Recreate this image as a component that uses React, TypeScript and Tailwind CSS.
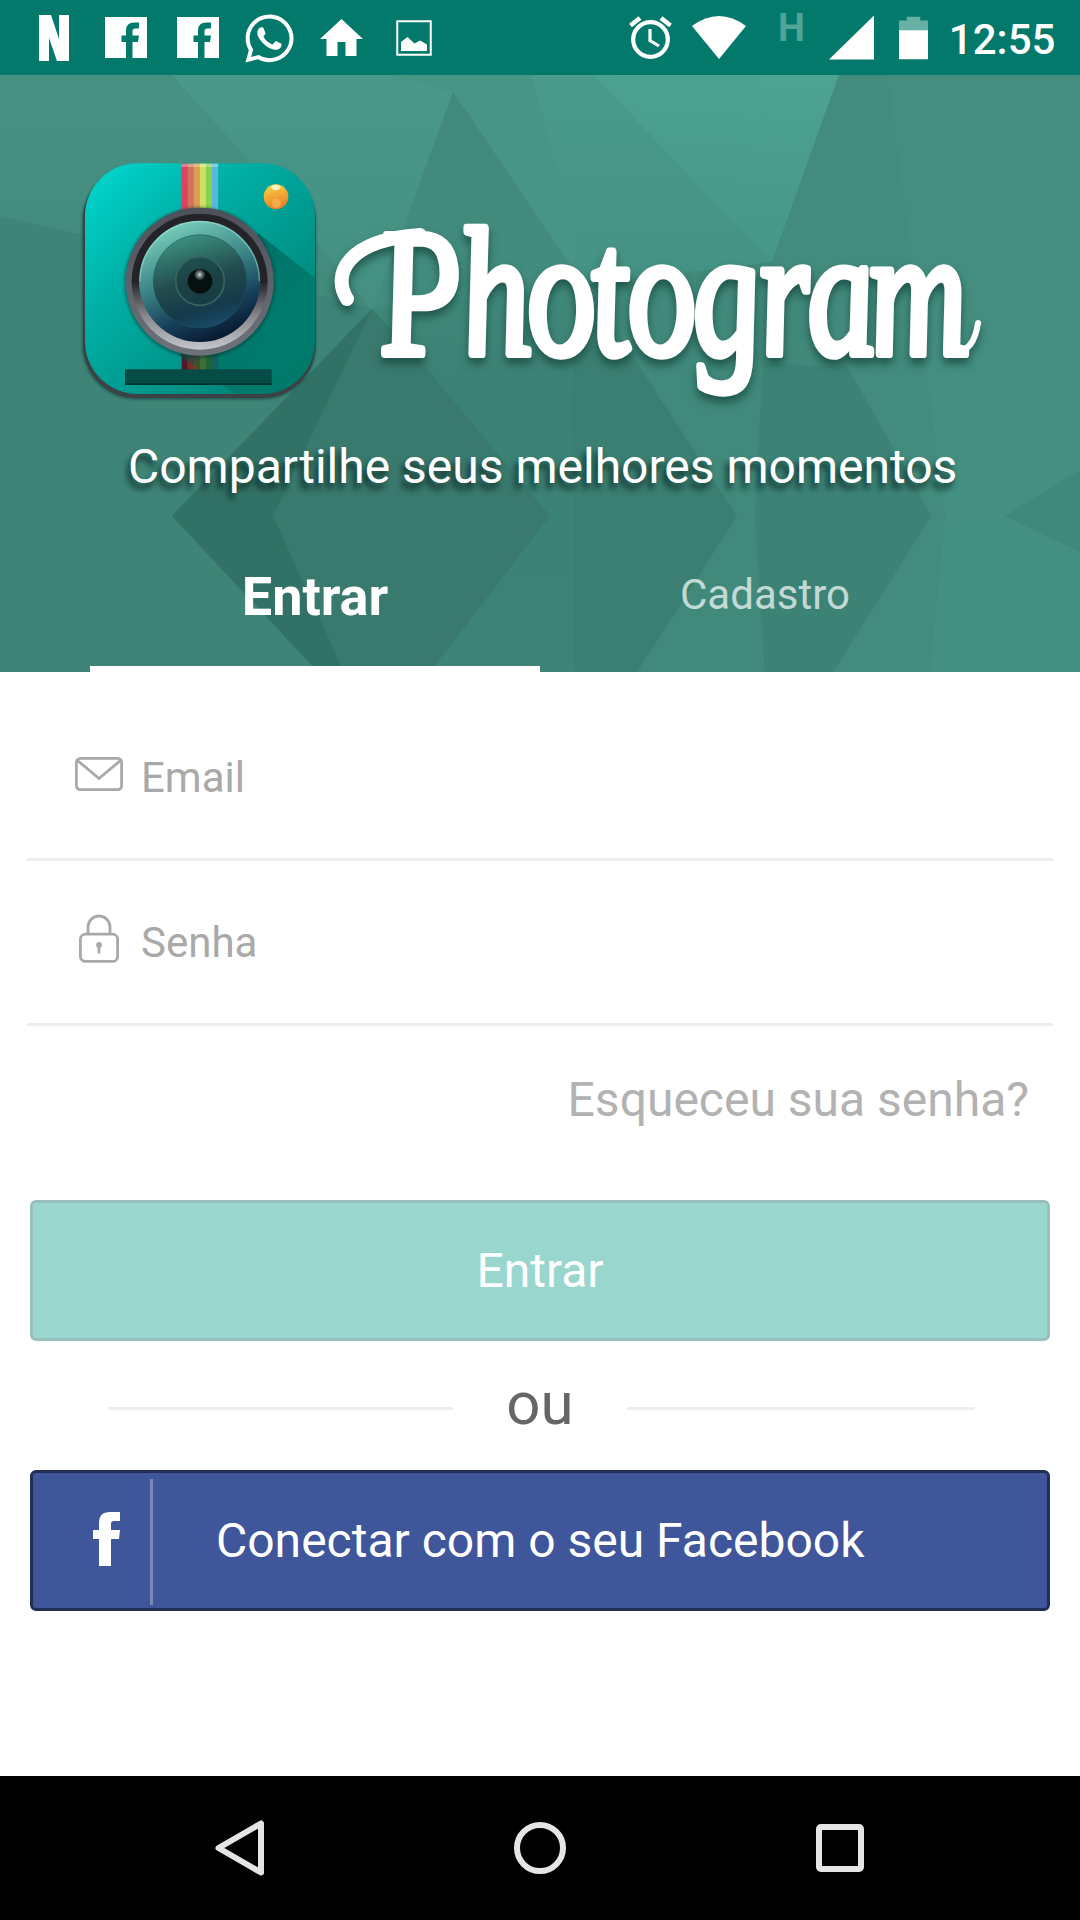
import React from "react";
import { FaWhatsapp } from "react-icons/fa";

function NetflixIcon() {
  return (
    <svg className="ml-[39px] h-[46px] w-[30px]" viewBox="0 0 30 46" fill="#fff">
      <path d="M0 0h12l8 24V0h10v46H18L10 23v23H0z" />
    </svg>
  );
}

function FacebookSquare({ className }: { className: string }) {
  return (
    <svg className={className} viewBox="0 0 42 41" fill="#fff">
      <path d="M0 0h42v41H27.500V25H33l1-6.500h-6.500v-4.200q0-2.800 3-2.800H34V5.500h-5q-8 0-8 8v5h-4.500V25H21v16H0z" />
    </svg>
  );
}

function StatusBar() {
  return (
    <div className="flex h-[75px] w-full items-center bg-[#02796b]">
      <NetflixIcon />
      <FacebookSquare className="ml-[36px] h-[41px] w-[42px]" />
      <FacebookSquare className="ml-[30px] h-[41px] w-[42px]" />
      <FaWhatsapp className="mt-px ml-[23px] text-[55px] text-white" />
      <svg className="ml-[23px] h-[37px] w-[43px]" viewBox="0 0 43 37" fill="#fff">
        <path d="M21.500 0 43 20H36.500v17h-11V23h-8v14h-11V20H0z" />
      </svg>
      <svg className="ml-[33px] mt-px h-[36px] w-[36px]" viewBox="0 0 36 36">
        <rect x="1.250" y="1.250" width="33.500" height="33.500" fill="none" stroke="#fff" strokeWidth="2" />
        <path d="M5 22l6.500-5 7 6.500 5.500-3 7 4V31H5z" fill="#fff" />
      </svg>
      <svg className="ml-[197px] h-[43px] w-[43px]" viewBox="0 0 43 43" fill="none" stroke="#fff">
        <circle cx="21.500" cy="23.500" r="17.300" strokeWidth="4.200" />
        <path d="M21 13v11.500l9 5.500" strokeWidth="3.200" />
        <path d="M1.500 9.500 11 2M41.500 9.500 32 2" strokeWidth="4.600" />
      </svg>
      <svg className="mr-[32px] ml-[20px] h-[43px] w-[54px]" viewBox="0 0 54 43" fill="#fff">
        <path d="M0 10Q27-10 54 10L27 43z" />
      </svg>
      <span className="mb-[20px] font-[Roboto] text-[38px] leading-none font-bold text-[#52a398]">H</span>
      <svg className="ml-[24px] h-[45px] w-[45px]" viewBox="0 0 46 45" fill="#fff">
        <path d="M46 0v45H0z" />
      </svg>
      <svg className="ml-[25px] h-[44px] w-[29px]" viewBox="0 0 30 44">
        <path d="M8 0h14v4h8v11H0V4h8z" fill="#68afa6" />
        <path d="M0 14h30v30H0z" fill="#fff" />
      </svg>
      <span className="mt-[5px] ml-[21px] font-[Roboto] text-[42px] leading-none font-medium text-white">12:55</span>
    </div>
  );
}

function FacetedBackdrop() {
  return (
    <svg className="absolute inset-0 h-[597px] w-[1080px]" viewBox="0 75 1080 597" preserveAspectRatio="none">
      <defs>
        <linearGradient id="base" x1="0" y1="0" x2="0" y2="1">
          <stop offset="0" stopColor="#479182" />
          <stop offset="0.450" stopColor="#41897b" />
          <stop offset="1" stopColor="#3e8678" />
        </linearGradient>
        <linearGradient id="right" x1="0" y1="0" x2="0" y2="1">
          <stop offset="0" stopColor="#448d7f" />
          <stop offset="1" stopColor="#439082" />
        </linearGradient>
        <linearGradient id="mid" x1="0" y1="0" x2="0" y2="1">
          <stop offset="0" stopColor="#4a9b8c" />
          <stop offset="1" stopColor="#449284" />
        </linearGradient>
        <linearGradient id="glow" x1="0.600" y1="0" x2="0.500" y2="1">
          <stop offset="0" stopColor="#4da292" />
          <stop offset="1" stopColor="#459788" />
        </linearGradient>
        <linearGradient id="peak" x1="0" y1="0" x2="0" y2="1">
          <stop offset="0" stopColor="#41897b" />
          <stop offset="1" stopColor="#428c7e" />
        </linearGradient>
        <linearGradient id="lower" x1="0" y1="0" x2="0" y2="1">
          <stop offset="0" stopColor="#418a7b" />
          <stop offset="0.350" stopColor="#3b8174" />
          <stop offset="1" stopColor="#3d8477" />
        </linearGradient>
      </defs>
      <rect y="75" width="1080" height="597" fill="url(#base)" />
      <path d="M0 216 83 235 372 309 172 516 318 672H0z" fill="#3e8578" />
      <path d="M172 75H390L453 92 403 229 372 309 240 150z" fill="url(#mid)" opacity="0.700" />
      <path d="M390 75H534L573 227V269L453 92z" fill="#479585" />
      <path d="M532 75H593L772 262 573 287V227z" fill="url(#mid)" />
      <path d="M593 75H839L772 262z" fill="url(#glow)" />
      <path d="M453 92 403 229 372 309 573 287V269z" fill="url(#peak)" />
      <path d="M372 309 573 286 772 262 838 350 931 516 833 672H430L550 516 417 357z" fill="url(#lower)" />
      <path d="M839 75H888L945 516 930 672H833L931 516 838 350 772 262z" fill="#428b7d" />
      <path d="M888 75H1080V672H930L945 516z" fill="url(#right)" />
      <path d="M372 309 172 516 318 672H430L550 516 417 357z" fill="#39796e" />
      <path d="M372 309 172 516 318 672H344L273 516z" fill="#327266" />
      <path d="M573 340 633 357 737 516 637 672H575z" fill="#3a7f72" />
      <path d="M633 357 737 516 637 672H765L755 516 763 364 772 262 600 300z" fill="#40897b" />
      <path d="M763 364 772 270 838 350 931 516 833 672H765L755 516z" fill="#3c8376" />
      <path d="M772 262 838 350 845 366 763 364z" fill="#41897b" />
      <path d="M1080 470 1005 516 1080 552z" fill="#3f887a" />
    </svg>
  );
}

const STRIPES = ["#dd4263", "#cf7459", "#dd9b56", "#d0e05d", "#87d153", "#58b8dc"];
const DARK_STRIPES = ["#4d1a2a", "#7c2e20", "#7b4415", "#80811c", "#3c6b20", "#21646d"];

function CameraLogo() {
  return (
    <svg className="h-[280px] w-[280px] shrink-0" viewBox="0 0 840 840">
      <defs>
        <linearGradient id="body" x1="0" y1="0" x2="1" y2="1">
          <stop offset="0.080" stopColor="#00d0c7" />
          <stop offset="0.350" stopColor="#00aea4" />
          <stop offset="0.650" stopColor="#00958a" />
          <stop offset="1" stopColor="#007766" />
        </linearGradient>
        <linearGradient id="cast" x1="0" y1="0" x2="1" y2="1">
          <stop offset="0.300" stopColor="#005548" stopOpacity="0.650" />
          <stop offset="1" stopColor="#006b5c" stopOpacity="0.100" />
        </linearGradient>
        <linearGradient id="rim" x1="0" y1="0" x2="0" y2="1">
          <stop offset="0" stopColor="#4d5058" />
          <stop offset="1" stopColor="#6d727b" />
        </linearGradient>
        <linearGradient id="ring" x1="0" y1="0" x2="0" y2="1">
          <stop offset="0.500" stopColor="#242428" />
          <stop offset="0.750" stopColor="#88868b" />
          <stop offset="1" stopColor="#c5c6cb" />
        </linearGradient>
        <linearGradient id="glass" x1="0.250" y1="0" x2="0.650" y2="1">
          <stop offset="0" stopColor="#7cd3bf" />
          <stop offset="0.450" stopColor="#3a8385" />
          <stop offset="0.750" stopColor="#163f5a" />
          <stop offset="1" stopColor="#06172d" />
        </linearGradient>
        <linearGradient id="inner" x1="0.300" y1="0" x2="0.600" y2="1">
          <stop offset="0" stopColor="#3d9482" />
          <stop offset="0.500" stopColor="#22494c" />
          <stop offset="0.800" stopColor="#153a4b" />
          <stop offset="1" stopColor="#174a69" />
        </linearGradient>
        <linearGradient id="flash" x1="0" y1="0" x2="0.300" y2="1">
          <stop offset="0" stopColor="#fbd84a" />
          <stop offset="1" stopColor="#ea8226" />
        </linearGradient>
        <radialGradient id="spark">
          <stop offset="0" stopColor="#d7dcdc" />
          <stop offset="1" stopColor="#8a9898" stopOpacity="0.200" />
        </radialGradient>
        <filter id="soft" x="-10%" y="-10%" width="120%" height="120%">
          <feGaussianBlur stdDeviation="5" />
        </filter>
        <clipPath id="bodyClip">
          <rect x="75" y="70" width="690" height="692" rx="158" />
        </clipPath>
      </defs>
      <rect x="67" y="82" width="700" height="696" rx="162" fill="#102f2b" opacity="0.600" filter="url(#soft)" />
      <rect x="69" y="78" width="698" height="696" rx="160" fill="#3b4144" />
      <rect x="75" y="70" width="690" height="692" rx="158" fill="url(#body)" />
      <g clipPath="url(#bodyClip)">
        {STRIPES.map((c, i) => (
          <rect key={c} x={365 + i * 18.2} y="70" width="18.500" height="150" fill={c} />
        ))}
        <rect x="365" y="72" width="109" height="9" fill="#fff" opacity="0.300" />
        {DARK_STRIPES.map((c, i) => (
          <rect key={c} x={365 + i * 18.2} y="630" width="18.500" height="60" fill={c} />
        ))}
        <path d="M595 280 770 418V765H530L355 645z" fill="url(#cast)" />
        <path d="M195 688H635V735H195z" fill="#064b45" />
        <path d="M195 730H635V735H195z" fill="#02332f" />
      </g>
      <circle cx="419" cy="428" r="226" fill="#07302c" opacity="0.500" filter="url(#soft)" />
      <circle cx="419" cy="425" r="222" fill="url(#rim)" />
      <circle cx="419" cy="425" r="204" fill="url(#ring)" />
      <circle cx="419" cy="424" r="182" fill="url(#glass)" />
      <path d="M240 424a179 179 0 0 1 358 0" fill="none" stroke="#b9f0e3" strokeWidth="4" opacity="0.450" />
      <circle cx="420" cy="424" r="140" fill="url(#inner)" stroke="#1c5357" strokeOpacity="0.600" strokeWidth="3" />
      <circle cx="420" cy="423" r="73" fill="#173c3f" fillOpacity="0.600" stroke="#35655f" strokeWidth="5" />
      <circle cx="420" cy="424" r="37" fill="#05100f" />
      <circle cx="419" cy="404" r="16" fill="url(#spark)" />
      <circle cx="648" cy="170" r="37" fill="url(#flash)" />
      <ellipse cx="647" cy="142" rx="14" ry="8" fill="#fff3c0" />
      <circle cx="649" cy="190" r="14" fill="#f8b556" opacity="0.700" />
    </svg>
  );
}

function Wordmark() {
  return (
    <svg
      className="h-[280px] w-[660px] shrink-0 overflow-visible drop-shadow-[0_6px_4px_rgba(15,60,50,0.650)]"
      viewBox="340 140 660 280"
      strokeLinecap="round"
      strokeLinejoin="round"
    >
      <path d="M347 299C332 275 346 240 420 235" fill="none" stroke="#fff" strokeWidth="14" />
      <path d="M958 351Q974 350 978 323" fill="none" stroke="#fff" strokeWidth="6" />
      <text
        transform="translate(0 354) scale(0.750 1) skewX(8)"
        x="513 622 709 794 843 929 1018 1082 1165"
        y="0"
        className="font-['Liberation_Serif'] text-[182px] italic"
        fill="#fff"
        stroke="#fff"
        strokeWidth="8"
      >
        Photogram
      </text>
    </svg>
  );
}

function Header() {
  return (
    <header className="relative h-[597px] w-full overflow-hidden">
      <FacetedBackdrop />
      <div className="relative flex flex-col">
        <div className="flex h-[345px] items-start pt-[65px] pl-[60px]">
          <CameraLogo />
          <Wordmark />
        </div>
        <p className="mt-[17px] h-[60px] pl-[128px] text-[48px] leading-[60px] whitespace-nowrap text-white [text-shadow:-3px_6px_6px_rgba(0,25,20,0.800)]">
          Compartilhe seus melhores momentos
        </p>
        <nav className="mx-[90px] mt-[43px] grid h-[132px] grid-cols-2">
          <div className="flex justify-center border-b-[6px] border-white pb-[12px]">
            <span className="self-center text-[54px] leading-[60px] font-bold text-white">Entrar</span>
          </div>
          <div className="flex justify-center pb-[22px]">
            <span className="self-center text-[42px] leading-[60px] text-white/70">Cadastro</span>
          </div>
        </nav>
      </div>
    </header>
  );
}

function MailIcon() {
  return (
    <svg className="mb-[7px] h-[34px] w-[48px]" viewBox="0 0 48 34" fill="none" stroke="#a9a9a9" strokeWidth="2.800">
      <rect x="1.400" y="1.400" width="45.200" height="31.200" rx="4" />
      <path d="M2.500 3.500 24 21.500 45.500 3.500" />
    </svg>
  );
}

function LockIcon() {
  return (
    <svg className="mb-[7px] h-[49px] w-[48px]" viewBox="0 0 48 49" fill="none" stroke="#a9a9a9" strokeWidth="2.800">
      <rect x="5.400" y="20.200" width="37.200" height="27.200" rx="5" />
      <path d="M13 20v-7a11 11 0 0 1 22 0v7" />
      <circle cx="24" cy="31" r="2.900" fill="#a9a9a9" stroke="none" />
      <path d="M24 31v8.500" />
    </svg>
  );
}

function LoginForm() {
  return (
    <main className="flex h-[1104px] flex-col bg-white">
      <div className="mx-[27px] flex h-[189px] items-center border-b-[3px] border-[#eee] pt-[25px] pl-[48px]">
        <MailIcon />
        <span className="ml-[18px] text-[42px] leading-[60px] text-[#a9a9a9]">Email</span>
      </div>
      <div className="mx-[27px] flex h-[165px] items-center border-b-[3px] border-[#eee] pl-[48px]">
        <LockIcon />
        <span className="mt-[2px] ml-[18px] text-[42px] leading-[60px] text-[#a9a9a9]">Senha</span>
      </div>
      <div className="flex h-[174px] items-center justify-end pr-[51px] pb-[27px]">
        <a className="text-[48px] leading-[60px] text-[#b2b2b2]">Esqueceu sua senha?</a>
      </div>
      <button className="mx-[30px] h-[141px] rounded-[6px] border-[3px] border-[#98c0bb] bg-[#99d6ce] text-[48px] text-white">
        Entrar
      </button>
      <div className="flex h-[129px] items-center pr-[105px] pl-[108px]">
        <div className="mt-[6px] h-[3px] w-[345px] bg-[#eee]" />
        <span className="mb-[4px] w-[174px] text-center text-[60px] leading-[70px] text-[#666]">ou</span>
        <div className="mt-[6px] h-[3px] w-[348px] bg-[#eee]" />
      </div>
      <button className="mx-[30px] flex h-[141px] items-center rounded-[6px] border-[3px] border-[#232f52] bg-[#40569a]">
        <svg className="mb-[4px] ml-[60px] h-[54px] w-[27px]" viewBox="0 0 27 54" fill="#fff">
          <path d="M6 54V27H0v-9h6v-7Q6 0 17 0h10v9h-6q-3 0-3 3v6h9l-1 9h-8v27z" />
        </svg>
        <span className="mt-[2px] ml-[30px] h-[126px] w-[3px] bg-[#7a89b9]" />
        <span className="ml-[63px] text-[48px] leading-[60px] whitespace-nowrap text-white">Conectar com o seu Facebook</span>
      </button>
    </main>
  );
}

function NavigationBar() {
  return (
    <div className="flex h-[144px] items-center bg-black">
      <svg className="ml-[215px] h-[56px] w-[49px]" viewBox="0 0 49 56" fill="none" stroke="#e5e5e5" strokeWidth="6" strokeLinejoin="round">
        <path d="M46 3.500v49L3.500 28z" />
      </svg>
      <svg className="ml-[250px] h-[52px] w-[52px]" viewBox="0 0 52 52" fill="none" stroke="#e5e5e5" strokeWidth="6">
        <circle cx="26" cy="26" r="23" />
      </svg>
      <div className="ml-[250px] h-[48px] w-[48px] rounded-[5px] border-[6px] border-[#e5e5e5]" />
    </div>
  );
}

export default function App() {
  return (
    <div className="flex h-[1920px] w-[1080px] flex-col overflow-hidden bg-white font-[Roboto,sans-serif]">
      <StatusBar />
      <Header />
      <LoginForm />
      <NavigationBar />
    </div>
  );
}
